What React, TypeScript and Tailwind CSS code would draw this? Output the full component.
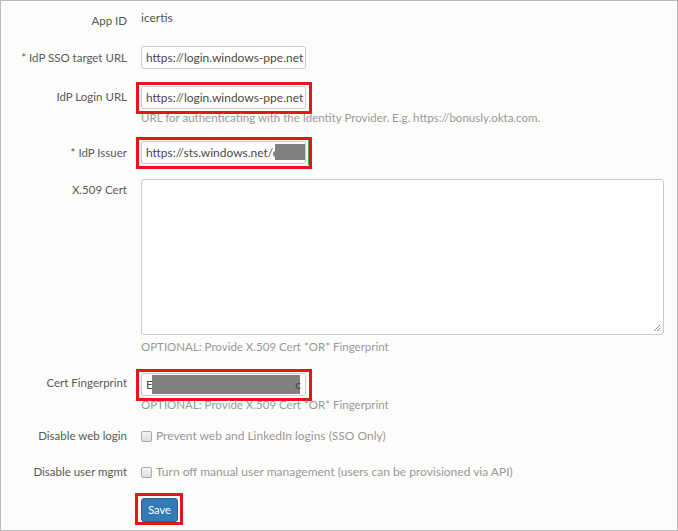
import React from 'react';

const font = { fontFamily: 'Lato, "Liberation Sans", sans-serif' };

function Label({ children, className = '' }: { children: React.ReactNode; className?: string }) {
  return (
    <div className={`w-[126px] shrink-0 text-right text-[11.5px] leading-[16px] text-[#5a5a5a] ${className}`}>
      {children}
    </div>
  );
}

function Input({ value, children }: { value?: string; children?: React.ReactNode }) {
  return (
    <div className="relative h-[23px] w-[165px] overflow-hidden rounded-[3px] border border-[#ccc] bg-white px-[4px] text-[12px] leading-[21px] text-[#4a4a4a] whitespace-nowrap">
      {value}
      {children}
    </div>
  );
}

// red annotation frame drawn over an input; negative margins keep the flow unchanged
function Marked({ children }: { children: React.ReactNode }) {
  return (
    <div className="-ml-[5px] -mr-[6px] -mt-[4px] -mb-[5px] w-fit border-[3px] border-[#e8141c] pl-[2px] pr-[3px] pt-[1px] pb-[2px]">
      {children}
    </div>
  );
}

function Help({ children }: { children: React.ReactNode }) {
  return <div className="text-[11.5px] leading-[14px] text-[#9a9a9a]">{children}</div>;
}

function Check({ text }: { text: string }) {
  return (
    <div className="flex items-center gap-[4px] text-[12px] leading-[16px] text-[#999]">
      <span className="h-[11px] w-[11px] rounded-[2px] border border-[#aaa] bg-gradient-to-b from-[#f4f4f4] to-[#ddd]" />
      <span>{text}</span>
    </div>
  );
}

export default function App() {
  return (
    <div className="h-[531px] w-[678px] border border-[#b9b9b9] bg-[#fcfcfb]" style={font}>
      <div className="flex flex-col">
        <div className="mt-[11px] flex items-start gap-[14px]">
          <Label className="mt-[1px]">App ID</Label>
          <div className="text-[12px] leading-[16px] text-[#555] -mt-[2px]">icertis</div>
        </div>

        <div className="mt-[17px] flex items-center gap-[14px]">
          <Label>* IdP SSO target URL</Label>
          <Input value="https://login.windows-ppe.net" />
        </div>

        <div className="mt-[17px] flex items-start gap-[14px]">
          <Label className="mt-[3px]">IdP Login URL</Label>
          <div className="flex flex-col">
            <Marked>
              <Input value="https://login.windows-ppe.net" />
            </Marked>
            <div className="mt-[2px]">
              <Help>URL for authenticating with the Identity Provider. E.g. https://bonusly.okta.com.</Help>
            </div>
          </div>
        </div>

        <div className="mt-[16px] flex items-center gap-[14px]">
          <Label>* IdP Issuer</Label>
          <Marked>
            <div className="relative">
              <Input value="https://sts.windows.net/e">
                <span className="absolute right-0 top-[2px] h-[16px] w-[30px] bg-[#808080]" />
              </Input>
              <span className="absolute -right-[3px] -top-[1px] h-[25px] w-[1px] bg-[#3cb04a]" />
            </div>
          </Marked>
        </div>

        <div className="mt-[15px] flex items-start gap-[14px]">
          <Label className="mt-[3px]">X.509 Cert</Label>
          <div className="flex flex-col">
            <div className="relative h-[156px] w-[523px] rounded-[3px] border border-[#ccc] bg-white">
              <svg className="absolute bottom-[2px] right-[2px]" width="8" height="8" viewBox="0 0 8 8">
                <path d="M7 1L1 7M7 4L4 7M7 6.5L6.5 7" stroke="#888" strokeWidth="1" />
              </svg>
            </div>
            <div className="mt-[5px]">
              <Help>OPTIONAL: Provide X.509 Cert *OR* Fingerprint</Help>
            </div>
          </div>
        </div>

        <div className="mt-[19px] flex items-start gap-[14px]">
          <Label className="mt-[2px]">Cert Fingerprint</Label>
          <div className="flex flex-col">
            <Marked>
              <Input value="E">
                <span className="absolute left-[10px] top-[1px] h-[19px] w-[148px] bg-[#808080]" />
                <span className="absolute right-[4px] top-0 text-[#444]">c</span>
              </Input>
            </Marked>
            <div className="mt-[2px]">
              <Help>OPTIONAL: Provide X.509 Cert *OR* Fingerprint</Help>
            </div>
          </div>
        </div>

        <div className="mt-[16px] flex items-center gap-[14px]">
          <Label>Disable web login</Label>
          <Check text="Prevent web and LinkedIn logins (SSO Only)" />
        </div>

        <div className="mt-[20px] flex items-center gap-[14px]">
          <Label>Disable user mgmt</Label>
          <Check text="Turn off manual user management (users can be provisioned via API)" />
        </div>

        <div className="mt-[18px] flex gap-[14px]">
          <div className="w-[126px] shrink-0" />
          <div className="-ml-[6px] -mt-[5px] w-fit border-[3px] border-[#e8141c] pl-[3px] pr-[2px] pt-[2px]">
            <button className="block h-[24px] w-[37px] rounded-[3px] border border-[#2a6496] bg-[#337ab7] text-[11px] leading-[22px] text-white">
              Save
            </button>
          </div>
        </div>
      </div>
    </div>
  );
}
